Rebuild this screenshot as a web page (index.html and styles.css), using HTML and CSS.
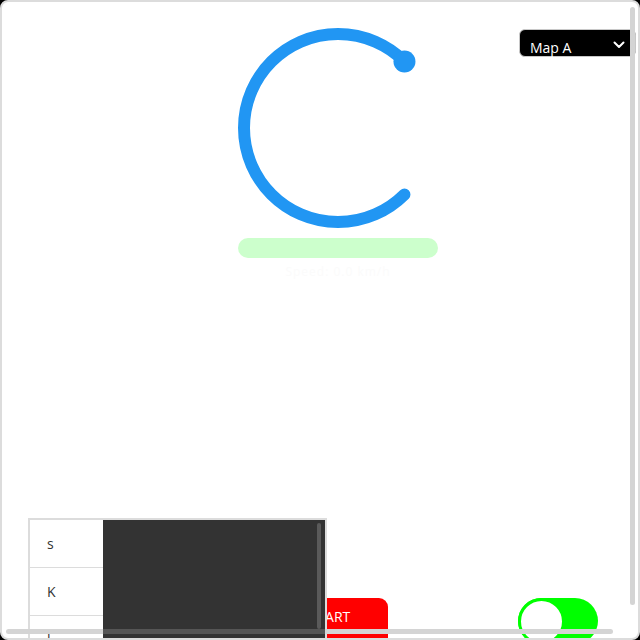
FILE: index.html
```html
<!DOCTYPE html>
<html>
<head>
<meta charset="utf-8">
<link rel="stylesheet" href="styles.css">
</head>
<body>
<div class="frame">
  <div class="top">
    <div class="gauge">
      <svg class="ring" width="202" height="202" viewBox="0 0 202 202">
        <path d="M167.47 34.53 A94 94 0 1 0 167.47 167.47" fill="none" stroke="#2196f3" stroke-width="12" stroke-linecap="round"/>
        <circle cx="167.47" cy="34.53" r="11" fill="#2196f3"/>
      </svg>
      <div class="bar"></div>
      <div class="caption">Speed: 0.0 km/h</div>
    </div>
    <div class="select">
      <span>Map A</span>
      <svg width="12" height="8" viewBox="0 0 12 8"><polyline points="1.5,1.5 6,6 10.5,1.5" fill="none" stroke="#fff" stroke-width="2" stroke-linecap="round" stroke-linejoin="round"/></svg>
    </div>
  </div>
  <div class="bottom">
    <div class="list">
      <div class="labels">
        <div class="row">s</div>
        <div class="row">K</div>
        <div class="row">l</div>
      </div>
      <div class="dark"><div class="dark-thumb"></div></div>
    </div>
    <div class="start">START</div>
    <div class="toggle"><div class="knob"></div></div>
  </div>
  <div class="vscroll"></div>
  <div class="hscroll"></div>
</div>
</body>
</html>
```
FILE: styles.css
```css
html, body {
  margin: 0;
  padding: 0;
  background: #000;
}
body {
  font-family: "Open Sans", "Liberation Sans", sans-serif;
}
.frame {
  width: 640px;
  height: 640px;
  box-sizing: border-box;
  border: 2px solid #dcdcdc;
  border-radius: 8px;
  background: #fff;
  overflow: hidden;
  position: relative;
}
.top {
  height: 516px;
  box-sizing: border-box;
  padding-top: 25px;
  display: flex;
  align-items: flex-start;
}
.gauge {
  margin-left: 235px;
  width: 202px;
  display: flex;
  flex-direction: column;
}
.ring {
  display: block;
}
.bar {
  margin-top: 9px;
  margin-left: 1px;
  width: 200px;
  height: 20px;
  border-radius: 10px;
  background: #ccffcc;
}
.caption {
  margin-top: 6px;
  text-align: center;
  font-size: 12px;
  line-height: 16px;
  color: #fbfbfb;
  letter-spacing: 1px;
}
.select {
  margin-left: auto;
  margin-top: 2px;
  margin-right: 2px;
  width: 117px;
  height: 28px;
  box-sizing: border-box;
  border: 1px solid #c8c8c8;
  border-radius: 6px;
  background: #000;
  color: #fff;
  font-size: 14px;
  display: flex;
  align-items: center;
  justify-content: space-between;
  padding: 8px 10px 0 10px;
}
.select svg {
  margin-top: -4px;
}
.bottom {
  display: flex;
  align-items: flex-start;
  padding-left: 26px;
}
.list {
  position: relative;
  z-index: 2;
  width: 299px;
  height: 200px;
  box-sizing: border-box;
  border: 2px solid #dcdcdc;
  background: #fff;
  display: flex;
  flex-shrink: 0;
}
.labels {
  width: 73px;
}
.row {
  height: 47px;
  border-bottom: 1px solid #dcdcdc;
  padding-left: 17px;
  display: flex;
  align-items: center;
  font-size: 14px;
  color: #333;
}
.dark {
  flex: 1;
  background: #333;
  position: relative;
}
.dark-thumb {
  position: absolute;
  right: 4px;
  top: 3px;
  width: 4px;
  height: 106px;
  border-radius: 2px;
  background: #5a5a5a;
}
.start {
  flex-shrink: 0;
  margin-left: -55px;
  margin-top: 80px;
  width: 116px;
  height: 60px;
  box-sizing: border-box;
  background: #ff0000;
  border-radius: 0 9px 0 0;
  color: #fff;
  font-size: 14px;
  text-align: center;
  padding-top: 9px;
}
.toggle {
  flex-shrink: 0;
  margin-left: 130px;
  margin-top: 80px;
  width: 80px;
  height: 46px;
  border-radius: 23px;
  background: #00ff00;
  display: flex;
}
.knob {
  width: 47px;
  height: 47px;
  box-sizing: border-box;
  border: 3px solid #00ff00;
  border-radius: 50%;
  background: #fff;
}
.vscroll {
  position: absolute;
  right: 3px;
  top: 5px;
  width: 5px;
  height: 598px;
  border-radius: 3px;
  background: #d4d4d4;
  z-index: 5;
}
.hscroll {
  position: absolute;
  left: 4px;
  bottom: 4px;
  width: 607px;
  height: 5px;
  border-radius: 3px;
  background: linear-gradient(to right, #d4d4d4 0, #d4d4d4 97px, #555 97px, #555 319px, #d4d4d4 319px);
  z-index: 5;
}
```
